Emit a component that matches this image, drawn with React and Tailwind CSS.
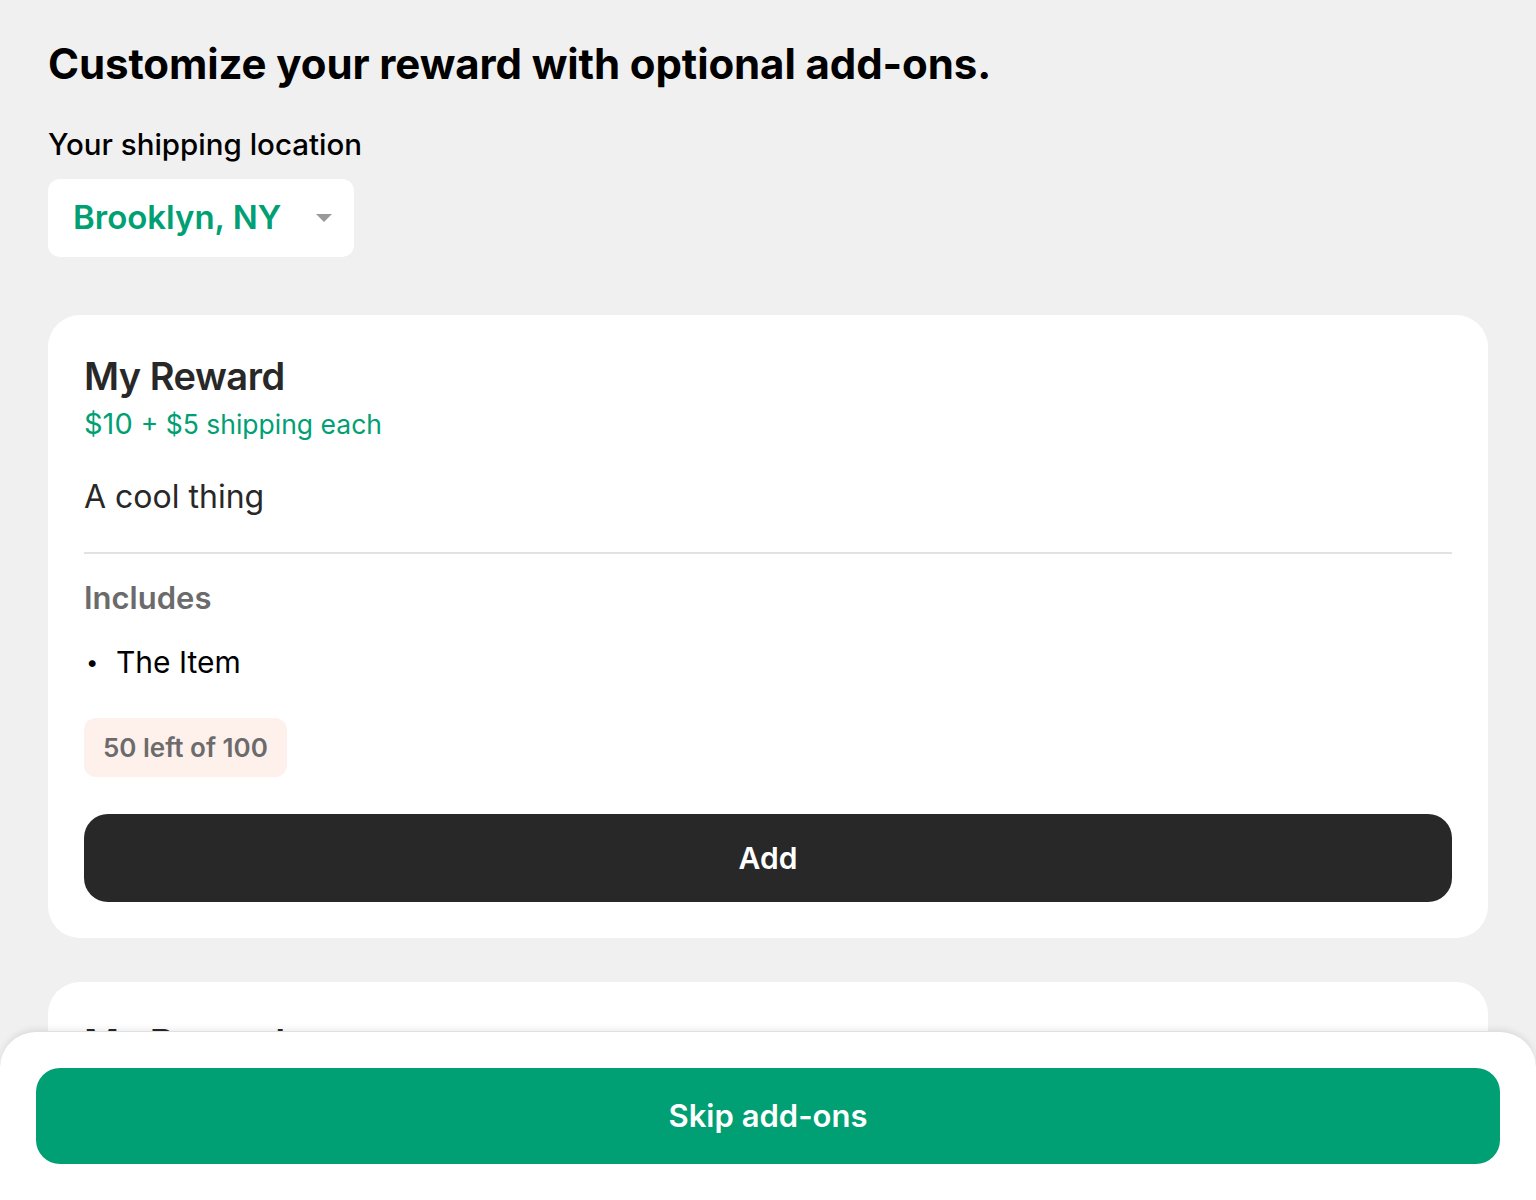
import React from "react";

const font = { fontFamily: "Inter, 'Noto Sans', sans-serif" };

function RewardCard() {
  return (
    <div className="rounded-[32px] bg-white px-9 pt-[38px] pb-9">
      <div className="text-[38px] font-semibold leading-[46px] tracking-[-0.5px] text-[#282828]">My Reward</div>
      <div className="mt-[9px] flex items-baseline gap-2 font-normal text-[#019f74]">
        <span className="text-[29px] leading-8">$10</span>
        <span className="text-[26.5px] leading-8">+ $5 shipping each</span>
      </div>
      <div className="mt-[37px] text-[32px] leading-10 text-[#282828]">A cool thing</div>
      <div className="mt-[35px] h-[2px] bg-[#e2e2e2]" />
      <div className="mt-[26px] text-[31px] font-semibold leading-9 text-[#6b6b6b]">Includes</div>
      <ul className="mt-[28px] text-[30px] leading-9 text-black">
        <li className="flex items-center">
          <span className="w-8 pl-0.5 text-[22px]">•</span>
          <span>The Item</span>
        </li>
      </ul>
      <div className="mt-[38px] inline-flex h-[59px] items-center rounded-xl bg-[#fef0eb] px-[19px] text-[26px] font-semibold text-[#6b6b6b]">
        50 left of 100
      </div>
      <button className="mt-[37px] flex h-[88px] w-full items-center justify-center rounded-3xl bg-[#282828] text-[30px] font-semibold text-white">
        Add
      </button>
    </div>
  );
}

export default function App() {
  return (
    <div className="relative h-[1200px] overflow-hidden bg-[#f0f0f0]" style={font}>
      <div className="px-12 pt-[38px]">
        <h1 className="text-[42px] font-bold leading-[52px] tracking-[-0.1px] text-black">
          Customize your reward with optional add-ons.
        </h1>
        <div className="mt-[36px] text-[29.5px] font-medium leading-9 text-black">Your shipping location</div>
        <button className="mt-[17px] flex h-[78px] w-[306px] items-center justify-between rounded-xl bg-white pl-[25px] pr-[22px]">
          <span className="text-[33px] font-semibold text-[#019f74]">Brooklyn, NY</span>
          <svg width="16" height="9" viewBox="0 0 16 9">
            <path d="M0 0 H16 L8 8 Z" fill="#999" />
          </svg>
        </button>
        <div className="mt-[58px] flex flex-col gap-11">
          <RewardCard />
          <RewardCard />
        </div>
      </div>
      <div className="absolute inset-x-0 bottom-0 h-[169px] rounded-t-[36px] border-t border-[#e0e0e0] bg-white px-9 pt-9 shadow-[0_-2px_6px_rgba(0,0,0,0.08)]">
        <button className="flex h-[96px] w-full items-center justify-center rounded-3xl bg-[#019f74] text-[31px] font-semibold text-white">
          Skip add-ons
        </button>
      </div>
    </div>
  );
}
